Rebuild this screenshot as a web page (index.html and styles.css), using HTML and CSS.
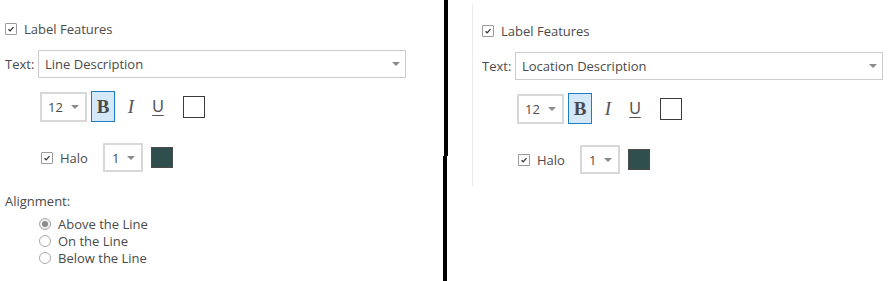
FILE: index.html
```html
<!DOCTYPE html>
<html lang="en">
<head>
    <meta charset="UTF-8">
    <title>Label Settings</title>
    <link rel="stylesheet" href="styles.css">
</head>
<body>
    <div class="page">
        <!-- Line labels -->
        <div class="panel panel-left">
            <label class="feature-row">
                <span class="check on"><svg viewBox="0 0 12 12"><path d="M3 6.2 L5 8.2 L9 3.8" /></svg></span>
                <span>Label Features</span>
            </label>
            <div class="text-row">
                <span class="field-label">Text:</span>
                <div class="select wide"><span>Line Description</span><span class="caret"></span></div>
            </div>
            <div class="style-row">
                <div class="select small"><span>12</span><span class="caret"></span></div>
                <button class="fmt fmt-b active">B</button>
                <button class="fmt fmt-i">I</button>
                <button class="fmt fmt-u">U</button>
                <span class="swatch white"></span>
            </div>
            <div class="halo-row">
                <span class="check on"><svg viewBox="0 0 12 12"><path d="M3 6.2 L5 8.2 L9 3.8" /></svg></span>
                <span class="halo-label">Halo</span>
                <div class="select tiny"><span>1</span><span class="caret"></span></div>
                <span class="swatch dark"></span>
            </div>
            <div class="align-label">Alignment:</div>
            <div class="radios">
                <label class="radio-row"><span class="radio on"></span>Above the Line</label>
                <label class="radio-row"><span class="radio"></span>On the Line</label>
                <label class="radio-row"><span class="radio"></span>Below the Line</label>
            </div>
        </div>

        <div class="divider">
            <div class="divider-top"></div>
            <div class="divider-bottom"></div>
        </div>

        <!-- Location labels -->
        <div class="panel panel-right">
            <label class="feature-row">
                <span class="check on"><svg viewBox="0 0 12 12"><path d="M3 6.2 L5 8.2 L9 3.8" /></svg></span>
                <span>Label Features</span>
            </label>
            <div class="text-row">
                <span class="field-label">Text:</span>
                <div class="select wide"><span>Location Description</span><span class="caret"></span></div>
            </div>
            <div class="style-row">
                <div class="select small"><span>12</span><span class="caret"></span></div>
                <button class="fmt fmt-b active">B</button>
                <button class="fmt fmt-i">I</button>
                <button class="fmt fmt-u">U</button>
                <span class="swatch white"></span>
            </div>
            <div class="halo-row">
                <span class="check on"><svg viewBox="0 0 12 12"><path d="M3 6.2 L5 8.2 L9 3.8" /></svg></span>
                <span class="halo-label">Halo</span>
                <div class="select tiny"><span>1</span><span class="caret"></span></div>
                <span class="swatch dark"></span>
            </div>
        </div>
    </div>
</body>
</html>
```

FILE: styles.css
```css
body {
    margin: 0;
    font-family: "Open Sans", "Noto Sans", sans-serif;
    font-size: 13px;
    color: #4a4a4a;
    background: white;
}
.page {
    display: flex;
    align-items: flex-start;
    width: 896px;
    height: 281px;
    overflow: hidden;
}
.panel {
    box-sizing: border-box;
}
.panel-left {
    width: 443px;
    padding: 22px 0 0 5px;
}
.panel-right {
    margin: 4px 0 0 24px;
    height: 183px;
    border-left: 1px solid #ececec;
    padding: 20px 0 0 9px;
}
.divider {
    width: 5px;
    height: 281px;
}
.divider-top {
    margin-left: 1px;
    width: 4px;
    height: 156px;
    background: #000;
}
.divider-bottom {
    width: 4px;
    height: 125px;
    background: #000;
}
.feature-row {
    display: flex;
    align-items: center;
    gap: 7px;
    height: 14px;
}
.check {
    box-sizing: border-box;
    width: 12px;
    height: 12px;
    border: 1px solid #9a9a9a;
    border-radius: 1px;
    background: white;
    display: inline-flex;
}
.check svg {
    width: 10px;
    height: 10px;
    fill: none;
    stroke: #3a3a3a;
    stroke-width: 1.6;
}
.text-row {
    display: flex;
    align-items: center;
    margin-top: 14px;
}
.field-label {
    width: 33px;
}
.select {
    box-sizing: border-box;
    display: flex;
    align-items: center;
    justify-content: space-between;
    background: white;
    border: 1px solid #cdcdcd;
}
.select.wide {
    width: 368px;
    height: 28px;
    padding: 0 5px 0 6px;
}
.select.small {
    width: 47px;
    height: 30px;
    padding: 0 6px 0 6px;
    border: 2px solid #d8d8d8;
}
.select.tiny {
    width: 40px;
    height: 29px;
    padding: 0 6px 0 7px;
    border: 2px solid #d8d8d8;
}
.caret {
    width: 0;
    height: 0;
    border-left: 4px solid transparent;
    border-right: 4px solid transparent;
    border-top: 4px solid #8a8a8a;
}
.style-row {
    display: flex;
    align-items: center;
    margin: 13px 0 0 35px;
    height: 31px;
}
.fmt {
    box-sizing: border-box;
    height: 31px;
    width: 24px;
    padding: 0;
    border: 1px solid transparent;
    background: none;
    color: #4a4a4a;
    cursor: pointer;
}
.fmt-b {
    margin-left: 4px;
    font-family: "Liberation Serif", serif;
    font-weight: bold;
    font-size: 19px;
}
.fmt-b.active {
    background: #d5e8f8;
    border: 1px solid #1f7cc4;
}
.fmt-i {
    margin-left: 4px;
    font-family: "Liberation Serif", serif;
    font-style: italic;
    font-size: 19px;
    color: #555;
}
.fmt-u {
    margin-left: 3px;
    font-size: 16px;
    color: #555;
    text-decoration: underline;
    text-underline-offset: 3px;
}
.swatch {
    box-sizing: border-box;
    width: 22px;
    height: 22px;
}
.swatch.white {
    margin-left: 13px;
    border: 1px solid #3a3a3a;
}
.swatch.dark {
    margin-left: 8px;
    height: 21px;
    background: #2f4f4f;
    border: 1px solid #4a4a4a;
}
.halo-row {
    display: flex;
    align-items: center;
    margin: 21px 0 0 36px;
    height: 29px;
}
.halo-label {
    margin-left: 7px;
    width: 43px;
}
.align-label {
    margin-top: 21px;
    height: 16px;
    line-height: 16px;
}
.radios {
    margin: 6px 0 0 34px;
}
.radio-row {
    display: flex;
    align-items: center;
    gap: 7px;
    height: 17px;
}
.radio {
    box-sizing: border-box;
    width: 12px;
    height: 12px;
    border: 1px solid #a8a8a8;
    border-radius: 50%;
    background: white;
    display: inline-flex;
    align-items: center;
    justify-content: center;
}
.radio.on {
    background: #eeeeee;
}
.radio.on::after {
    content: "";
    width: 6px;
    height: 6px;
    border-radius: 50%;
    background: #8a8a8a;
}
```
